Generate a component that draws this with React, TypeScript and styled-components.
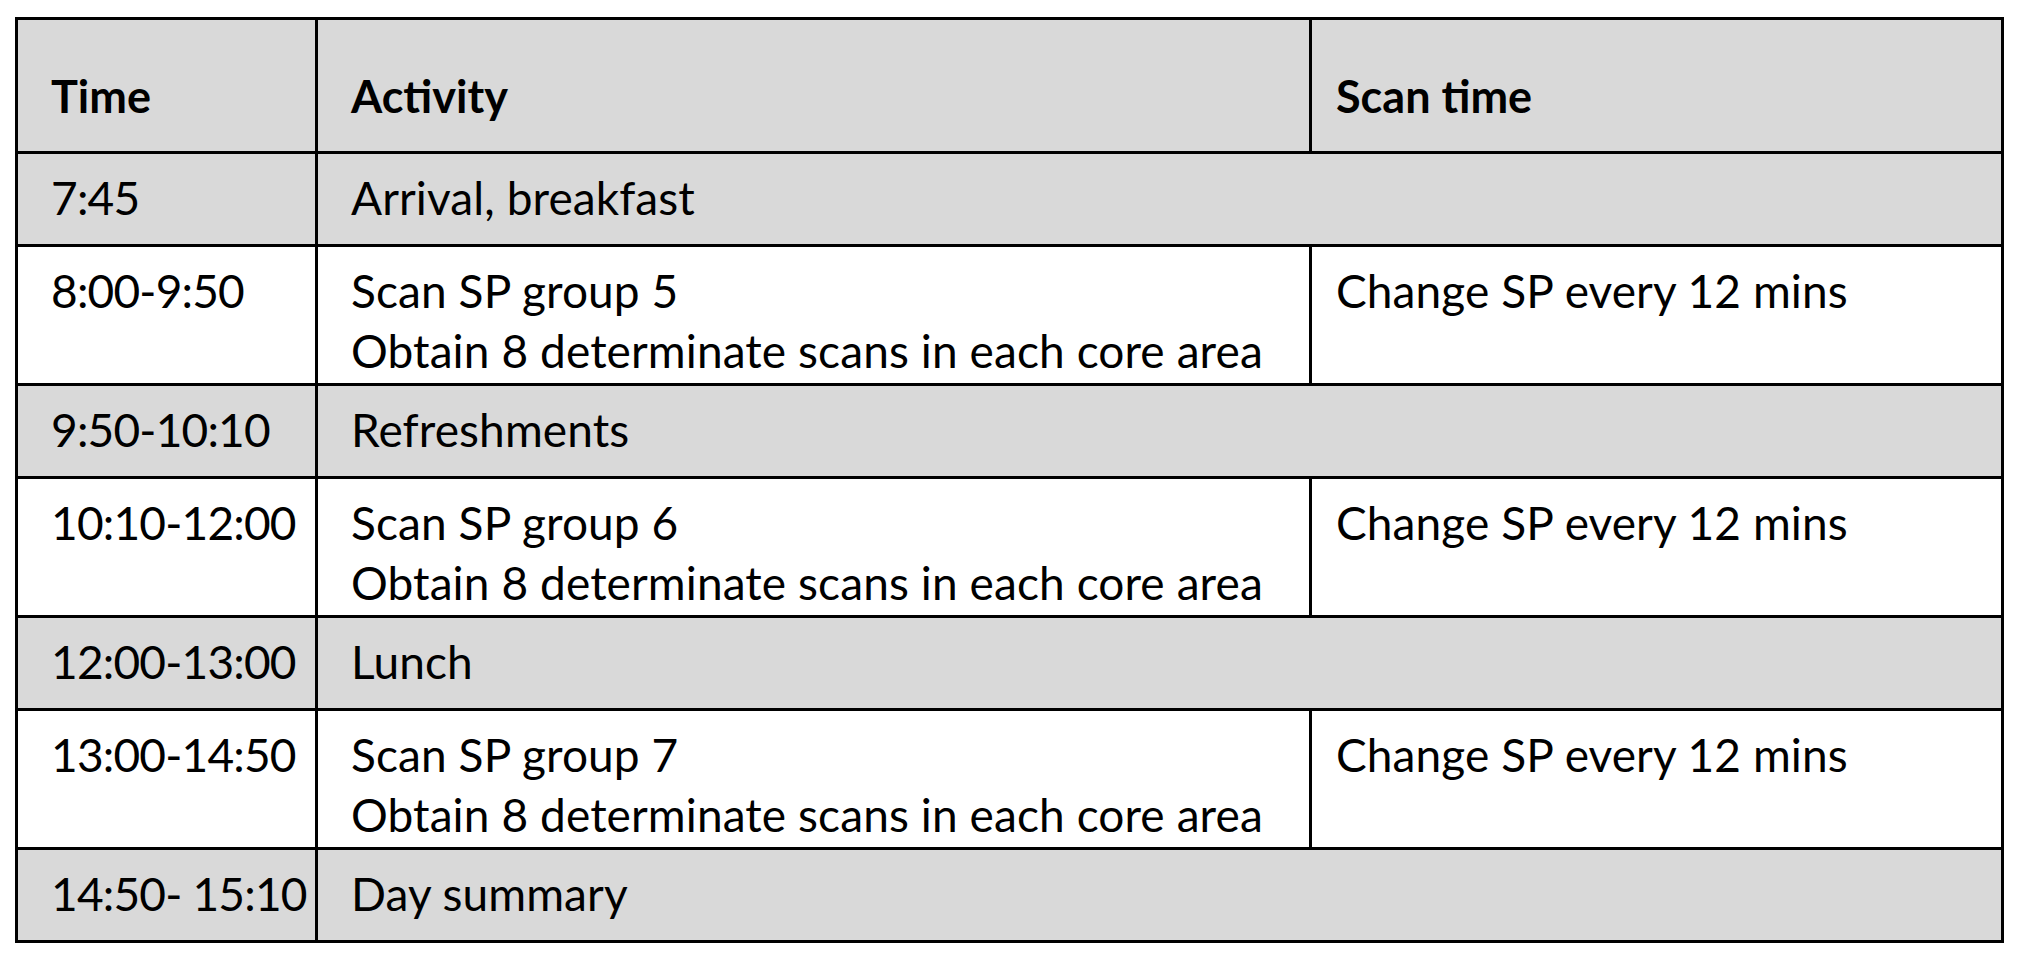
import React from "react";
import styled, { createGlobalStyle } from "styled-components";

const GlobalStyle = createGlobalStyle`
  html, body {
    margin: 0;
    padding: 0;
    background: #ffffff;
  }
  body {
    font-family: Lato, "Open Sans", "Liberation Sans", sans-serif;
    color: #000000;
  }
`;

const Page = styled.div`
  padding: 17px 0 0 15px;
`;

const Table = styled.table`
  border-collapse: collapse;
  table-layout: fixed;
  width: 1986px;
  font-size: 46px;
  line-height: 60px;
`;

const HeadRow = styled.tr`
  background: #d9d9d9;
  height: 134px;
`;

const Row = styled.tr<{ $shaded: boolean; $tall: boolean }>`
  background: ${({ $shaded }) => ($shaded ? "#d9d9d9" : "#ffffff")};
  height: ${({ $tall }) => ($tall ? "139px" : "93px")};
`;

const HeadCell = styled.th<{ $pad: number }>`
  border: 3px solid #000;
  text-align: left;
  vertical-align: top;
  font-weight: 700;
  font-size: 45px;
  padding: 46px 0 0 ${({ $pad }) => $pad}px;
  white-space: nowrap;
`;

// time cells run a little tighter: Calibri digits are narrower than Lato's
const Cell = styled.td<{ $pad: number; $tight?: boolean }>`
  border: 3px solid #000;
  vertical-align: top;
  padding: 14px 0 0 ${({ $pad }) => $pad}px;
  letter-spacing: ${({ $tight }) => ($tight ? "-0.8px" : "0.1px")};
  white-space: nowrap;
`;

const Line = styled.div``;

type Entry = {
  time: string;
  lines: string[];
  scan?: string;
};

const entries: Entry[] = [
  { time: "7:45", lines: ["Arrival, breakfast"] },
  {
    time: "8:00-9:50",
    lines: ["Scan SP group 5", "Obtain 8 determinate scans in each core area"],
    scan: "Change SP every 12 mins",
  },
  { time: "9:50-10:10", lines: ["Refreshments"] },
  {
    time: "10:10-12:00",
    lines: ["Scan SP group 6", "Obtain 8 determinate scans in each core area"],
    scan: "Change SP every 12 mins",
  },
  { time: "12:00-13:00", lines: ["Lunch"] },
  {
    time: "13:00-14:50",
    lines: ["Scan SP group 7", "Obtain 8 determinate scans in each core area"],
    scan: "Change SP every 12 mins",
  },
  { time: "14:50- 15:10", lines: ["Day summary"] },
];

export default function App() {
  return (
    <>
      <GlobalStyle />
      <Page>
        <Table>
          <colgroup>
            <col style={{ width: 300 }} />
            <col style={{ width: 994 }} />
            <col style={{ width: 692 }} />
          </colgroup>
          <thead>
            <HeadRow>
              <HeadCell $pad={33}>Time</HeadCell>
              <HeadCell $pad={33}>Activity</HeadCell>
              <HeadCell $pad={24}>Scan time</HeadCell>
            </HeadRow>
          </thead>
          <tbody>
            {entries.map((e) => {
              const tall = e.lines.length > 1;
              return (
                <Row key={e.time} $shaded={!e.scan} $tall={tall}>
                  <Cell $pad={33} $tight>
                    {e.time}
                  </Cell>
                  <Cell $pad={33} colSpan={e.scan ? 1 : 2}>
                    {e.lines.map((l) => (
                      <Line key={l}>{l}</Line>
                    ))}
                  </Cell>
                  {e.scan && <Cell $pad={24}>{e.scan}</Cell>}
                </Row>
              );
            })}
          </tbody>
        </Table>
      </Page>
    </>
  );
}
